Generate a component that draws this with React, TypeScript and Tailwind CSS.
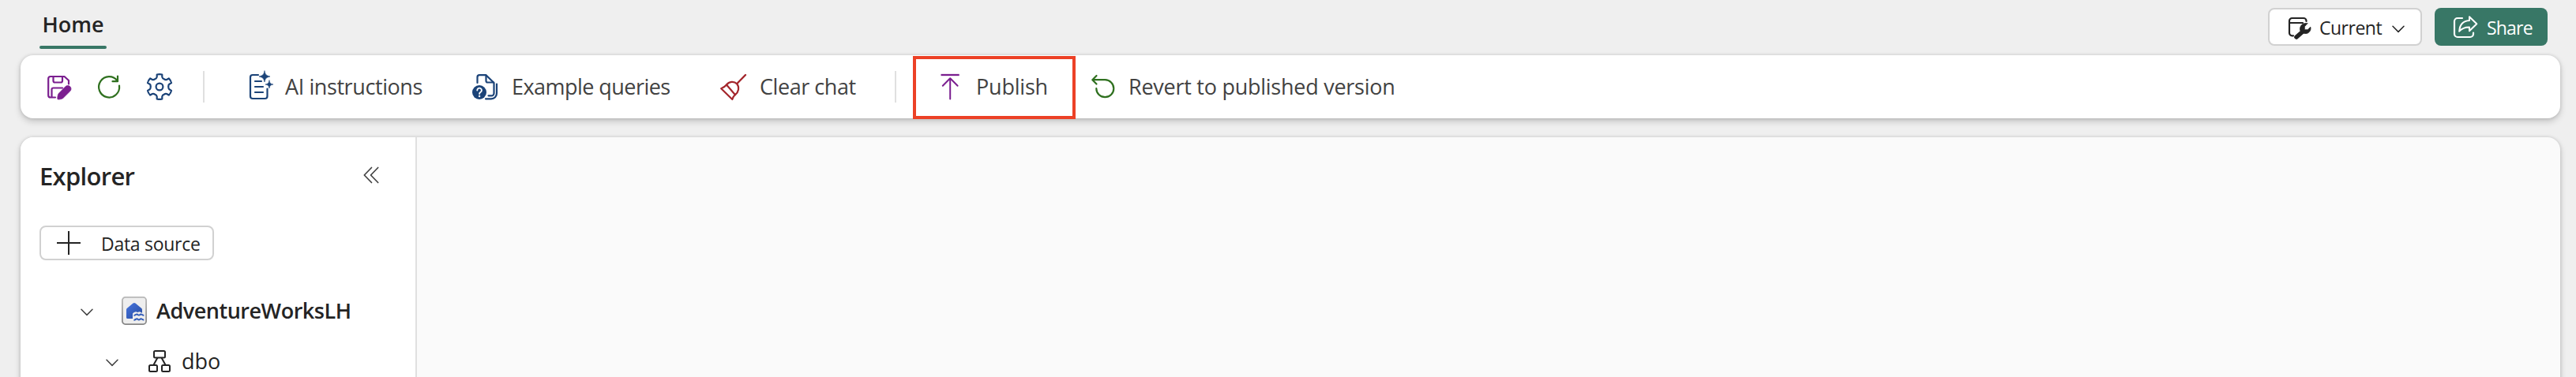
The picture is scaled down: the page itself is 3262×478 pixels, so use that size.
import React from "react";

const stroke = {
  fill: "none",
  strokeWidth: 2.2,
  strokeLinecap: "round",
  strokeLinejoin: "round",
} as const;

function Icon({ className = "", children }: { className?: string; children: React.ReactNode }) {
  return (
    <svg viewBox="0 0 36 36" className={`size-9 shrink-0 overflow-visible ${className}`} aria-hidden="true" {...stroke} stroke="currentColor">
      {children}
    </svg>
  );
}

const SaveIcon = () => (
  <Icon className="text-[#7b1f8f]">
    <path d="M13 31.5H7A2.8 2.8 0 0 1 4.2 28.7V7.8A2.8 2.8 0 0 1 7 5H24.5L30 10V14.5" />
    <path d="M10.5 5V10.5A2 2 0 0 0 12.5 12.5H20A2 2 0 0 0 22 10.5V5" />
    <path d="M8.5 31V21.5A2 2 0 0 1 10.5 19.5H22" />
    <path d="M25.8 17.8A4.1 4.1 0 0 1 31.8 23.6L23 32.3C22 33.3 18 34.3 16.3 34C15.5 33.8 15.8 28.3 17.3 26.5Z" fill="currentColor" strokeWidth={0.8} />
  </Icon>
);

const RefreshIcon = () => (
  <Icon className="text-[#2f701f]">
    <path d="M31 16.5A13 13.2 0 1 1 28.6 10.5" />
    <path d="M29 4.5V11.2H22.5" />
  </Icon>
);

const gearPath = (() => {
  const at = (deg: number, r: number) => {
    const a = ((deg - 90) * Math.PI) / 180;
    return `${(18 + r * Math.cos(a)).toFixed(2)} ${(18 + r * Math.sin(a)).toFixed(2)}`;
  };
  let d = "";
  for (let k = 0; k < 6; k++) {
    const a = k * 60;
    d += `${k ? "L" : "M"}${at(a - 12, 15.8)}Q${at(a, 16.5)} ${at(a + 12, 15.8)}`;
    d += `L${at(a + 15, 12.8)}Q${at(a + 19, 11.2)} ${at(a + 30, 11.3)}Q${at(a + 41, 11.2)} ${at(a + 45, 12.8)}`;
  }
  return d + "Z";
})();

const GearIcon = () => (
  <Icon className="text-[#1b4378]">
    <path d={gearPath} />
    <circle cx="18" cy="18" r="4.4" />
  </Icon>
);

const InstructionsIcon = () => (
  <Icon className="text-[#1b4378]">
    <path d="M14 3H7A3 3 0 0 0 4 6V30A3 3 0 0 0 7 33H22.5A3 3 0 0 0 25.5 30V20.5" />
    <path d="M10 11H18M10 18H20M10 25H20" />
    <path d="M22 -2C23 2.5 24 3.8 29 5C24 6.2 23 7.5 22 12C21 7.5 20 6.2 15 5C20 3.8 21 2.5 22 -2Z" fill="currentColor" strokeWidth={0.6} />
    <path d="M28 10C28.7 13.5 29.5 14.3 33 15C29.5 15.7 28.7 16.5 28 20C27.3 16.5 26.5 15.7 23 15C26.5 14.3 27.3 13.5 28 10Z" fill="currentColor" strokeWidth={0.6} />
  </Icon>
);

const QueriesIcon = () => (
  <Icon className="text-[#1b4378]">
    <path d="M8.500 13V5.800A2.600 2.600 0 0 1 11.100 3.200H19.500L29.500 13V26.300A3 3 0 0 1 26.500 29.300H22.500" />
    <path d="M19.500 3.500V10.500A2 2 0 0 0 21.500 12.500H29" />
    <path d="M33 14.500V26A7 7 0 0 1 26 33.300H19" />
    <circle cx="11" cy="25" r="9" fill="currentColor" stroke="none" />
    <path d="M8.300 22.500A2.800 2.800 0 1 1 12.600 24.800Q11.100 25.700 11.100 27" stroke="#fff" strokeWidth={1.9} />
    <circle cx="11.1" cy="30" r="1.2" fill="#fff" stroke="none" />
  </Icon>
);

const BroomIcon = () => (
  <Icon className="text-[#a4262c]">
    <path d="M33 3L22.3 14" strokeWidth={2.4} />
    <path d="M2.2 20.3L16.3 34Q17.5 30 20 28.2C24.5 24.5 25.5 18.5 22.3 14.5C18.5 10.5 12 11.3 9 15.5Q6.5 18.5 2.2 20.3Z" />
    <path d="M9 15.5L20 28.2" />
  </Icon>
);

const PublishIcon = () => (
  <Icon className="text-[#7b1f8f]">
    <path d="M6.500 3H29.700" strokeLinecap="butt" strokeWidth={2.3} />
    <path d="M18.200 33.500V7.500M8.800 16.800L18.200 7.200L27.600 16.800" strokeWidth={2} />
  </Icon>
);

const RevertIcon = () => (
  <Icon className="text-[#2f701f]">
    <path d="M9.5 4L4.3 9.2L9.5 14.5M4.5 9.2H20.3A11 11 0 1 1 9.3 20.2" />
  </Icon>
);

const WindowWrenchIcon = () => (
  <Icon className="text-[#242424]">
    <g transform="translate(0 2)">
      <path d="M10 27.300H8.500A3.500 3.500 0 0 1 5 23.800V8.500A3.500 3.500 0 0 1 8.500 5H23A3.500 3.500 0 0 1 26.500 8.500V9M5 11H22" />
      <path d="M14 29L22 22" strokeWidth={5.6} />
      <path d="M27.800 11.800L24.300 15.800V19.700H28.200L31.800 16.200C33 20.500 29.500 25 25 24.500L21 23.800L18.700 20.500C17.500 14.500 22.500 10.300 27.800 11.800Z" fill="currentColor" strokeWidth={0.8} />
    </g>
  </Icon>
);

const ShareIcon = () => (
  <Icon className="text-white">
    <g transform="translate(1 2)">
      <path d="M14 5H8A4 4 0 0 0 4 9V25A4 4 0 0 0 8 29H24A4 4 0 0 0 28 25V23.500" />
      <path d="M23 3.200L32.300 12.200L23 21.200V16.500C17 16.300 14 17.500 10.200 21.700C10.700 13.500 15 8.500 23 8Z" strokeWidth={2} />
    </g>
  </Icon>
);

const Chevron = ({ className = "" }: { className?: string }) => (
  <svg viewBox="0 0 16 10" className={`h-[10px] w-4 shrink-0 ${className}`} fill="none" stroke="currentColor" strokeWidth={1.5} strokeLinecap="round" strokeLinejoin="round">
    <path d="M1 1.3L8 8.4L15 1.3" />
  </svg>
);

const LakehouseIcon = () => (
  <svg viewBox="0 0 32 36" className="h-9 w-8 shrink-0">
    <defs>
      <linearGradient id="frame" x1="0" y1="0" x2="0" y2="1">
        <stop offset="0" stopColor="#b9b9b9" />
        <stop offset="1" stopColor="#868686" />
      </linearGradient>
      <linearGradient id="house" x1="0" y1="0" x2="1" y2="1">
        <stop offset="0" stopColor="#4674df" />
        <stop offset="1" stopColor="#274c9f" />
      </linearGradient>
    </defs>
    <rect x="0.9" y="0.9" width="30.2" height="34.2" rx="3.8" fill="#eeeeee" stroke="url(#frame)" strokeWidth="1.8" />
    <path d="M14.5 8.6Q16 7.6 17.5 8.6L25.3 15Q26 15.7 26 16.8V28H7.500A1.500 1.500 0 0 1 6 26.500V16.800Q6 15.700 6.700 15Z" fill="url(#house)" />
    <path d="M15 22Q17.500 19 20 21.500Q22.500 19 25 21.500L28 22V29H15Z" fill="#eeeeee" stroke="#eeeeee" strokeWidth="2" />
    <path d="M15.500 23.800C17.500 24.200 18.200 21.800 19.800 22.500C21.500 24.200 22.300 24.200 24 22.500C25.500 21.800 26.200 24 28.300 23.800M15.500 29.600C17.500 30 18.200 27.600 19.800 28.300C21.500 30 22.300 30 24 28.300C25.500 27.600 26.200 29.800 28.300 29.600" fill="none" stroke="#2f5ab8" strokeWidth="2" />
  </svg>
);

const SchemaIcon = () => (
  <svg viewBox="0 0 28 28" className="size-7 shrink-0" fill="none" stroke="#242424" strokeWidth="2">
    <rect x="7" y="1" width="14" height="8.5" rx="1.5" />
    <rect x="1" y="19" width="10" height="8" rx="1.5" />
    <rect x="17" y="19" width="10" height="8" rx="1.5" />
    <path d="M11.5 9.5L6.3 19M16.5 9.5L21.7 19" />
  </svg>
);

const Divider = () => <div className="h-10 w-[2px] shrink-0 bg-[#e0e0e0]" />;

export default function App() {
  return (
    <div className="flex h-[478px] w-[3262px] flex-col overflow-hidden bg-[#efefef] font-['Open_Sans','Noto_Sans',sans-serif] text-[27px] whitespace-nowrap text-[#242424]">
      <header className="flex h-[70px] shrink-0 justify-between pr-9 pl-[50px]">
        <div className="flex w-[85px] flex-col items-center pt-[10px]">
          <span className="h-12 pt-px leading-[40px] font-semibold">Home</span>
          <div className="h-1 w-full rounded-full bg-[#387766]" />
        </div>
        <div className="flex gap-4 pt-[10px] text-[23px]">
          <button className="flex h-12 w-[195px] items-center rounded-lg border-2 border-[#d1d1d1] bg-white pl-5">
            <WindowWrenchIcon />
            <span className="ml-[7px] w-[92px] pt-[2px] text-left tracking-[-0.5px]">Current</span>
            <Chevron className="mt-[6px]" />
          </button>
          <button className="flex h-12 w-[143px] items-center rounded-lg bg-[#387766] pl-5 text-white">
            <ShareIcon />
            <span className="ml-[10px] pt-[2px] tracking-[-0.8px]">Share</span>
          </button>
        </div>
      </header>

      <div className="mr-5 ml-[26px] flex h-20 shrink-0 items-center rounded-2xl bg-white pl-[31px] text-[#424242] shadow-[0_0_4px_rgba(0,0,0,0.14),0_4px_8px_rgba(0,0,0,0.18)]">
        <div className="flex w-[200px] items-center">
          <SaveIcon />
          <div className="mr-7 ml-[27px] flex">
            <RefreshIcon />
          </div>
          <GearIcon />
        </div>
        <Divider />
        <div className="ml-[54px] flex w-[283px] items-center">
          <InstructionsIcon />
          <span className="ml-3 pt-px tracking-[-0.41px]">AI instructions</span>
        </div>
        <div className="flex w-[315px] items-center">
          <QueriesIcon />
          <span className="ml-4 pt-px tracking-[-0.54px]">Example queries</span>
        </div>
        <div className="flex w-[222px] items-center">
          <BroomIcon />
          <span className="ml-[15px] pt-px tracking-[-0.45px]">Clear chat</span>
        </div>
        <Divider />
        <div className="mt-[2px] ml-[21px] flex h-20 w-[206px] shrink-0 items-center border-4 border-[#ec4126] pb-[2px] pl-[25px]">
          <PublishIcon />
          <span className="ml-[15px] pt-px tracking-[-0.2px]">Publish</span>
        </div>
        <div className="ml-[17px] flex items-center">
          <RevertIcon />
          <span className="ml-[14px] pt-px tracking-[-0.26px]">Revert to published version</span>
        </div>
      </div>

      <main className="mt-6 mr-5 ml-[26px] flex h-[330px] shrink-0 rounded-2xl bg-[#fafafa] shadow-[0_0_4px_rgba(0,0,0,0.14),0_4px_8px_rgba(0,0,0,0.18)]">
        <aside className="flex w-[502px] shrink-0 flex-col rounded-tl-2xl border-r-2 border-[#e0e0e0] bg-white">
          <div className="flex h-24 items-center justify-between pr-[46px] pl-6">
            <h2 className="pt-[2px] text-[31px] font-semibold tracking-[-0.7px]">Explorer</h2>
            <svg viewBox="0 0 20 22" className="h-[22px] w-5" fill="none" stroke="#424242" strokeWidth={1.7} strokeLinecap="round" strokeLinejoin="round">
              <path d="M10.5 1.5L1.3 11L10.5 20.5M18.7 1.5L9.5 11L18.7 20.5" />
            </svg>
          </div>
          <button className="mt-4 ml-6 flex h-11 w-[221px] shrink-0 items-center rounded-lg border-2 border-[#d1d1d1] bg-white pl-5 text-[23px]">
            <svg viewBox="0 0 30 30" className="mb-px size-[30px] shrink-0" fill="none" stroke="#242424" strokeWidth={2}>
              <path d="M15 0V30M0 15H30" />
            </svg>
            <span className="ml-[26px] pt-[2px] tracking-[-0.28px]">Data source</span>
          </button>
          <div className="mt-8 flex h-16 shrink-0 items-center pl-[76px]">
            <Chevron className="mt-[4px] mr-9 text-[#424242]" />
            <LakehouseIcon />
            <span className="ml-3 pt-px font-semibold tracking-[-0.47px]">AdventureWorksLH</span>
          </div>
          <div className="flex h-16 shrink-0 items-center pl-[108px]">
            <Chevron className="mt-[4px] mr-[38px] text-[#424242]" />
            <SchemaIcon />
            <span className="ml-[14px] pt-px">dbo</span>
          </div>
        </aside>
      </main>
    </div>
  );
}
